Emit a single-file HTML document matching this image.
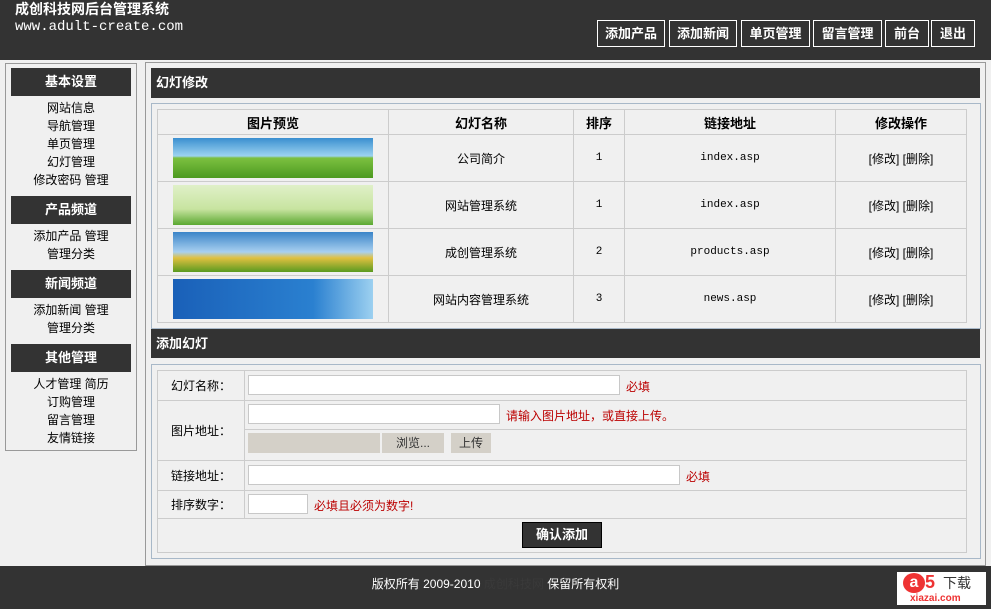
<!DOCTYPE html>
<html><head><meta charset="utf-8"><style>
*{margin:0;padding:0;box-sizing:border-box}
body{width:991px;height:609px;overflow:hidden;background:#f0f0f0;font-family:"Liberation Sans","Noto Sans CJK SC","WenQuanYi Zen Hei",sans-serif;font-size:12px;color:#000;position:relative}
.a{position:absolute}
.dark{background:#333;color:#fff}
.btn{position:absolute;top:20px;height:27px;border:1px solid #fff;color:#fff;font-weight:bold;font-size:13px;line-height:25px;text-align:center}
.sh{position:absolute;left:11px;width:120px;height:28px;background:#333;color:#fff;font-weight:bold;font-size:13px;line-height:28px;text-align:center}
.lk{position:absolute;left:5px;width:132px;text-align:center;font-size:12px;line-height:18px}
.bar{position:absolute;left:151px;width:829px;background:#333;color:#fff;font-weight:bold;font-size:13px;padding-left:5px}
table{border-collapse:collapse;position:absolute}
td{border:1px solid #ccc;text-align:center;font-size:12px}
.m{font-family:"Liberation Mono","DejaVu Sans Mono",monospace;font-size:11px}
.th td{font-weight:bold;font-size:13px}
.img{width:200px;height:40px;margin:0 auto}
.inp{position:absolute;background:#fff;border:1px solid #c8c8c8}
.red{position:absolute;color:#b00;font-size:12px}
</style></head><body>
<div class="a dark" style="left:0;top:0;width:991px;height:60px"></div>
<div class="a" style="left:15px;top:0;color:#fff;font-weight:bold;font-size:14px;line-height:18px">成创科技网后台管理系统</div>
<div class="a" style="left:15px;top:19px;color:#fff;font-family:'Liberation Mono',monospace;font-size:14px">www.adult-create.com</div>
<div class="btn" style="left:597px;width:68px">添加产品</div>
<div class="btn" style="left:669px;width:68px">添加新闻</div>
<div class="btn" style="left:741px;width:69px">单页管理</div>
<div class="btn" style="left:813px;width:69px">留言管理</div>
<div class="btn" style="left:885px;width:44px">前台</div>
<div class="btn" style="left:931px;width:44px">退出</div>

<div class="a" style="left:5px;top:63px;width:132px;height:388px;border:1px solid #999;background:#f0f0f0"></div>
<div class="sh" style="top:68px">基本设置</div>
<div class="lk" style="top:99px">网站信息<br>导航管理<br>单页管理<br>幻灯管理<br>修改密码 管理</div>
<div class="sh" style="top:196px">产品频道</div>
<div class="lk" style="top:227px">添加产品 管理<br>管理分类</div>
<div class="sh" style="top:270px">新闻频道</div>
<div class="lk" style="top:301px">添加新闻 管理<br>管理分类</div>
<div class="sh" style="top:344px">其他管理</div>
<div class="lk" style="top:375px">人才管理 简历<br>订购管理<br>留言管理<br>友情链接</div>

<div class="a" style="left:145px;top:62px;width:841px;height:504px;border:1px solid #999"></div>
<div class="bar" style="top:68px;height:30px;line-height:30px">幻灯修改</div>
<div class="a" style="left:151px;top:103px;width:830px;height:226px;border:1px solid #a8b8c8"></div>
<table style="left:157px;top:109px;width:810px">
<tr class="th" style="height:25px"><td style="width:231px">图片预览</td><td style="width:185px">幻灯名称</td><td style="width:51px">排序</td><td style="width:211px">链接地址</td><td>修改操作</td></tr>
<tr style="height:47px"><td><div class="img" style="background:linear-gradient(#3a8fd0,#9cd3f0 45%,#7cc040 50%,#4c9a20)"></div></td><td>公司简介</td><td class="m">1</td><td class="m">index.asp</td><td>[修改] [删除]</td></tr>
<tr style="height:47px"><td><div class="img" style="background:linear-gradient(#e0f0c8,#c8e4a0 60%,#5aa830)"></div></td><td>网站管理系统</td><td class="m">1</td><td class="m">index.asp</td><td>[修改] [删除]</td></tr>
<tr style="height:47px"><td><div class="img" style="background:linear-gradient(#3a84c8,#a8d0f0 50%,#e0c040 65%,#5a9a20)"></div></td><td>成创管理系统</td><td class="m">2</td><td class="m">products.asp</td><td>[修改] [删除]</td></tr>
<tr style="height:47px"><td><div class="img" style="background:linear-gradient(90deg,#1a60b8,#2a80d0 70%,#9cd0f0)"></div></td><td>网站内容管理系统</td><td class="m">3</td><td class="m">news.asp</td><td>[修改] [删除]</td></tr>
</table>

<div class="bar" style="top:329px;height:29px;line-height:29px">添加幻灯</div>
<div class="a" style="left:151px;top:364px;width:830px;height:195px;border:1px solid #a8b8c8"></div>
<table style="left:157px;top:370px;width:810px">
<tr style="height:30px"><td style="width:87px">幻灯名称：</td><td></td></tr>
<tr style="height:29px"><td rowspan="2">图片地址：</td><td></td></tr>
<tr style="height:31px"><td></td></tr>
<tr style="height:30px"><td>链接地址：</td><td></td></tr>
<tr style="height:28px"><td>排序数字：</td><td></td></tr>
<tr style="height:34px"><td colspan="2"></td></tr>
</table>
<div class="inp" style="left:248px;top:375px;width:372px;height:20px"></div>
<div class="red" style="left:626px;top:378px">必填</div>
<div class="inp" style="left:248px;top:404px;width:252px;height:20px"></div>
<div class="red" style="left:506px;top:407px">请输入图片地址，或直接上传。</div>
<div class="a" style="left:248px;top:433px;width:132px;height:20px;background:#d4d0c8"></div>
<div class="a" style="left:382px;top:433px;width:62px;height:20px;background:#d4d0c8;text-align:center;line-height:20px;color:#333">浏览...</div>
<div class="a" style="left:451px;top:433px;width:40px;height:20px;background:#d4d0c8;text-align:center;line-height:20px;color:#333">上传</div>
<div class="inp" style="left:248px;top:465px;width:432px;height:20px"></div>
<div class="red" style="left:686px;top:468px">必填</div>
<div class="inp" style="left:248px;top:494px;width:60px;height:20px"></div>
<div class="red" style="left:314px;top:497px">必填且必须为数字!</div>
<div class="a" style="left:522px;top:522px;width:80px;height:26px;background:#333;border:1px solid #000;color:#fff;font-weight:bold;font-size:13px;text-align:center;line-height:24px">确认添加</div>

<div class="a dark" style="left:0;top:566px;width:991px;height:43px"></div>
<div class="a" style="left:0;top:575px;width:991px;text-align:center;color:#fff;font-size:12px">版权所有 2009-2010 <span style="color:#3a3a3a">成创科技网</span> 保留所有权利</div>
<div class="a" style="left:897px;top:572px;width:89px;height:33px;background:#fff"></div>
<div class="a" style="left:903px;top:573px;width:22px;height:20px;border-radius:50%;background:#e33;color:#fff;font-weight:bold;font-size:16px;line-height:19px;text-align:center">a</div>
<div class="a" style="left:925px;top:572px;color:#e33;font-weight:bold;font-size:18px;line-height:20px">5</div>
<div class="a" style="left:943px;top:575px;color:#333;font-size:14px;line-height:16px">下载</div>
<div class="a" style="left:910px;top:593px;color:#e33;font-weight:bold;font-size:10px;line-height:11px">xiazai.com</div>
</body></html>
